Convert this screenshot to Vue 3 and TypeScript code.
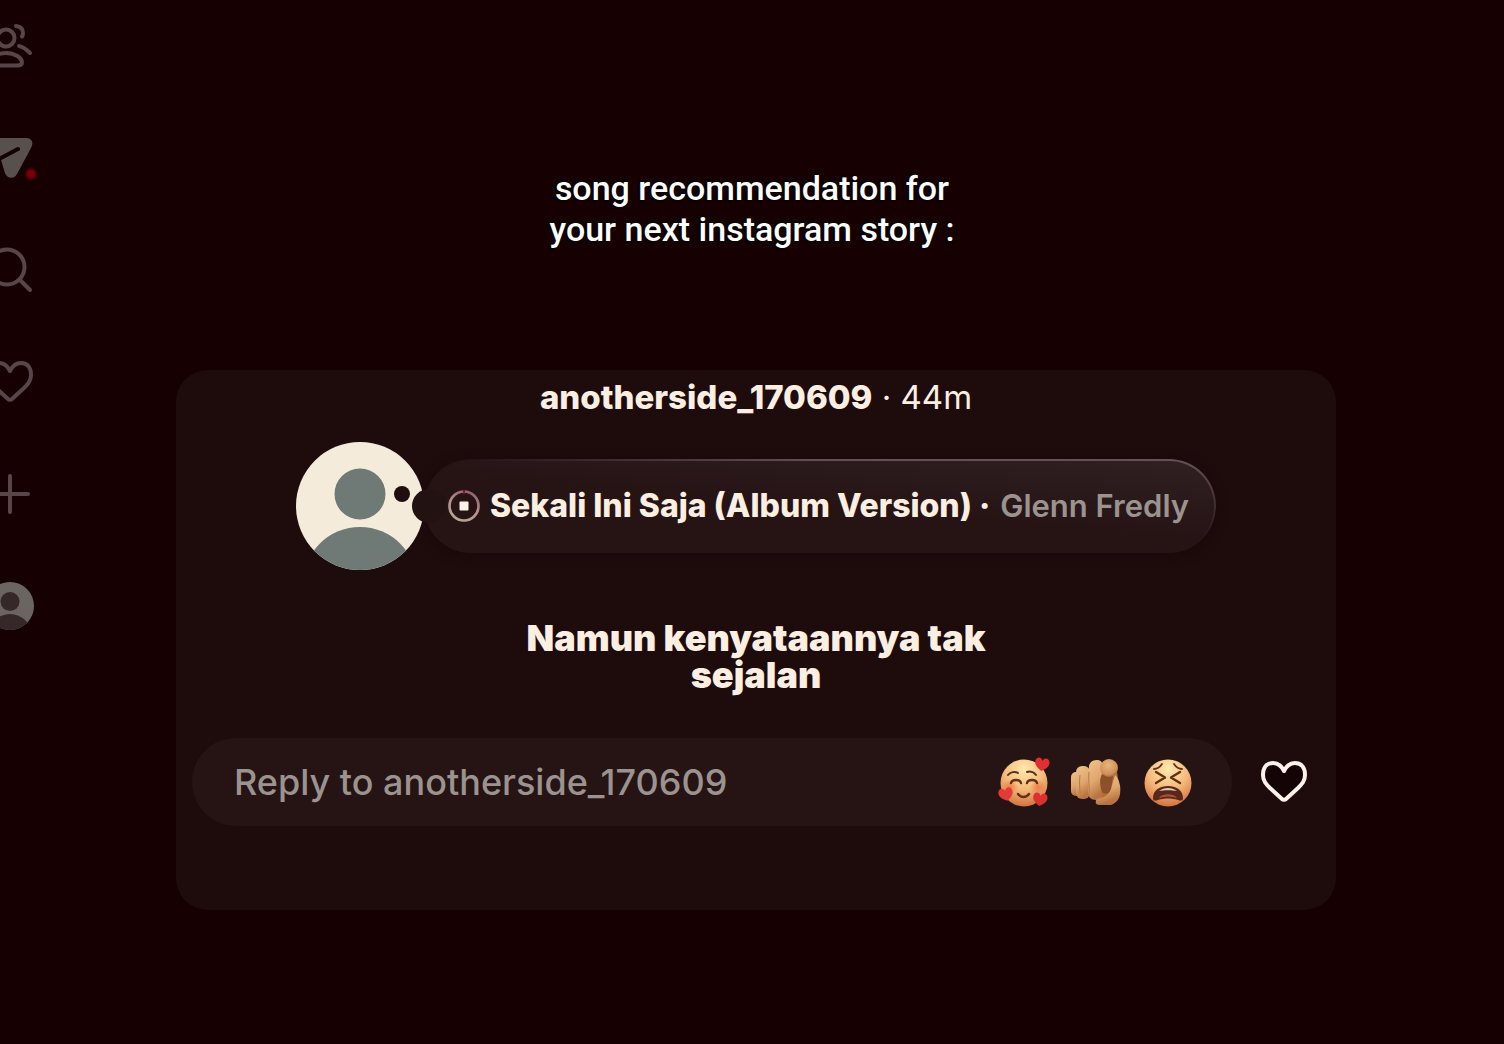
<script setup lang="ts">
import { ref } from 'vue'

const username = 'anotherside_170609'
const reply = ref('')
</script>

<template>
  <div class="page">
    <nav class="rail" aria-label="Main">
      <a href="#friends" aria-label="Friends">
        <svg viewBox="0 0 48 48" class="line">
          <circle cx="20" cy="16" r="8.500" />
          <path d="M20 31c-9 0-16 5-16 9.500 0 2 2 3 5 3h22c3 0 5-1 5-3C36 36 29 31 20 31z" />
          <path d="M30 4c5 .5 7 3.500 7 7 0 1.500-.3 2.500-1 3.500" />
          <path d="M33 24c5 1 8 4 11 7" />
        </svg>
      </a>
      <a href="#messages" aria-label="Messages">
        <svg viewBox="0 0 48 48">
          <path class="fill" d="M6 4h33c7 0 9 4 6 10L31 40c-3 5.500-10 5-12-1l-4-13L3 13C0 9 1 4 6 4z" />
          <path class="cut" d="M12 25.500l20-10.500" />
        </svg>
        <span class="dot"></span>
      </a>
      <a href="#search" aria-label="Search">
        <svg viewBox="0 0 48 48" class="line">
          <circle cx="21" cy="21" r="17.500" />
          <path d="M33.500 33.500L44 44" />
        </svg>
      </a>
      <a href="#activity" aria-label="Activity">
        <svg viewBox="0 0 48 48" class="line">
          <path d="M24 13C21 7 17 5 13 5 6 5 3 10 3 17c0 6 3 9 7 13l12 11c1 1 3 1 4 0l12-11c4-4 7-7 7-13 0-7-3-12-10-12-4 0-8 2-11 8z" />
        </svg>
      </a>
      <a href="#create" aria-label="Create">
        <svg viewBox="0 0 48 48" class="line">
          <path d="M24 6v36M6 24h36" />
        </svg>
      </a>
      <a href="#profile" aria-label="Profile">
        <svg viewBox="0 0 48 48">
          <clipPath id="rail-face"><circle cx="24" cy="24" r="24" /></clipPath>
          <g clip-path="url(#rail-face)">
            <rect width="48" height="48" fill="#6a6560" />
            <circle cx="24" cy="19.500" r="9.500" fill="#362729" />
            <circle cx="24" cy="54" r="22" fill="#362729" />
          </g>
        </svg>
      </a>
    </nav>

    <main class="content">
      <h1 class="caption">song recommendation for<br />your next instagram story :</h1>

      <section class="card">
        <header class="who"><b>{{ username }}</b> · 44m</header>

        <div class="note">
          <div class="avatar">
            <svg viewBox="0 0 128 128" role="img" aria-label="Profile picture">
              <clipPath id="face"><circle cx="64" cy="64" r="64" /></clipPath>
              <g clip-path="url(#face)">
                <rect width="128" height="128" fill="#f4ebdb" />
                <circle cx="64" cy="52" r="25.500" fill="#6f7975" />
                <circle cx="64" cy="142" r="57" fill="#6f7975" />
                <circle cx="106" cy="52" r="8" fill="#1e0e0e" />
              </g>
              <circle cx="133" cy="64" r="17" fill="#231212" />
            </svg>
          </div>
          <div class="song">
            <button type="button" class="stop" aria-label="Stop">
              <svg viewBox="0 0 32 32">
                <defs>
                  <linearGradient id="ring" x1="0.700" y1="0" x2="0.300" y2="1">
                    <stop offset="0" stop-color="#95606f" />
                    <stop offset="0.500" stop-color="#b78f8e" />
                    <stop offset="1" stop-color="#b8a595" />
                  </linearGradient>
                </defs>
                <circle cx="16" cy="16" r="14.500" fill="none" stroke="url(#ring)" stroke-width="2.600" />
                <path d="M16 0v4" stroke="#7b1547" stroke-width="2" />
                <rect x="11.500" y="11.500" width="9" height="9" rx="1" fill="#fff1e8" />
              </svg>
            </button>
            <span class="title">Sekali Ini Saja (Album Version) ·</span>
            <span class="artist">Glenn Fredly</span>
          </div>
        </div>

        <p class="lyric">Namun kenyataannya tak sejalan</p>

        <form class="reply" @submit.prevent>
          <div class="field">
            <input v-model="reply" type="text" :placeholder="`Reply to ${username}`" :aria-label="`Reply to ${username}`" />
            <button type="button" class="emoji" aria-label="Smiling face with hearts">
              <svg viewBox="0 0 52 52">
                <defs>
                  <radialGradient id="smile" cx="0.500" cy="0.200" r="0.850">
                    <stop offset="0" stop-color="#ffe8b0" />
                    <stop offset="0.500" stop-color="#f5bb7a" />
                    <stop offset="1" stop-color="#cf6a38" />
                  </radialGradient>
                  <radialGradient id="blush">
                    <stop offset="0" stop-color="#ee6840" stop-opacity="0.700" />
                    <stop offset="1" stop-color="#ee6840" stop-opacity="0" />
                  </radialGradient>
                  <path id="tiny-heart" d="M0 6C-5 3-8 0-7-4c1-4 6-4 7 0 1-4 6-4 7 0C8 0 5 3 0 6z" />
                </defs>
                <circle cx="26" cy="27" r="23.500" fill="url(#smile)" />
                <circle cx="12" cy="31" r="8" fill="url(#blush)" />
                <circle cx="40" cy="31" r="8" fill="url(#blush)" />
                <g fill="none" stroke="#603018" stroke-width="2" stroke-linecap="round">
                  <path d="M10 19c2-3 7-4 10-2M29 16c3-1 7 0 9 3" />
                  <path d="M13 27c1-4 9-4 10 0M29 27c1-4 9-4 10 0M20 38c3 4 8 4 11 0" stroke-width="2.400" />
                </g>
                <use href="#tiny-heart" transform="translate(44 9) rotate(8)" fill="#dc3031" />
                <use href="#tiny-heart" transform="translate(8 39) rotate(-12)" fill="#e33a37" />
                <use href="#tiny-heart" transform="translate(42 44) rotate(8)" fill="#dd3130" />
              </svg>
            </button>
            <button type="button" class="emoji" aria-label="Pointing at you">
              <svg viewBox="0 0 52 52">
                <defs>
                  <linearGradient id="finger" x1="0" y1="0" x2="0.300" y2="1">
                    <stop offset="0" stop-color="#f0c48a" />
                    <stop offset="0.600" stop-color="#dfa66e" />
                    <stop offset="1" stop-color="#b87442" />
                  </linearGradient>
                  <radialGradient id="tip" cx="0.450" cy="0.350" r="0.700">
                    <stop offset="0" stop-color="#e9b67c" />
                    <stop offset="0.700" stop-color="#cf9259" />
                    <stop offset="1" stop-color="#a3622f" />
                  </radialGradient>
                </defs>
                <path d="M24 10h22l3 18c1 9-1 19-8 21H30c-4 0-5-2-4-4l-3-9z" fill="#b06f3d" />
                <rect x="1" y="16" width="11" height="24" rx="5" fill="url(#finger)" />
                <rect x="6" y="10" width="14" height="33" rx="6" fill="url(#finger)" />
                <path d="M19 10c1-5 5-6 8-6 5 0 6 4 6 9l-1 26c0 4-3 5-6 5-5 0-8-3-8-8z" fill="url(#finger)" />
                <path d="M19 16c-1 8 1 17 0 24M10 19c-1 7 0 14 0 19" fill="none" stroke="#b67846" />
                <path d="M32 18c-3 6-2 12 0 18 4 3 8 1 9-2l2-14z" fill="#8c5128" />
                <path d="M27 43c7-1 12-4 14-10l4-14c5 5 6 13 5 19-1 7-5 10-12 10h-9c-3 0-4-3-2-5z" fill="url(#finger)" />
                <circle cx="39" cy="12" r="9" fill="url(#tip)" />
              </svg>
            </button>
            <button type="button" class="emoji" aria-label="Tired face">
              <svg viewBox="0 0 52 52">
                <circle cx="26" cy="27" r="23.500" fill="url(#smile)" />
                <g fill="none" stroke="#603018" stroke-width="2.400" stroke-linecap="round" stroke-linejoin="round">
                  <path d="M12 13c3 0 6-2 8-5M32 8c2 3 5 5 8 5" stroke-width="1.800" />
                  <path d="M14 16l9 5.500-9 5.500M38 16l-9 5.500 9 5.500" />
                </g>
                <path d="M11 42c0-8 7-12 15-12s15 4 15 12c0 3-2 3-5 2-6-2-14-2-20 0-3 1-5 1-5-2z" fill="#59281a" />
                <path d="M17 35c5-4 13-4 18 0-5-1-13-1-18 0z" fill="#d8cbc3" />
                <path d="M17 42c3-5 15-5 18 0-6-2-12-2-18 0z" fill="#a6523f" />
              </svg>
            </button>
          </div>
          <button type="button" class="like" aria-label="Like">
            <svg viewBox="0 0 48 48">
              <path d="M24 13C21 7 17 5 13 5 6 5 3 10 3 17c0 6 3 9 7 13l12 11c1 1 3 1 4 0l12-11c4-4 7-7 7-13 0-7-3-12-10-12-4 0-8 2-11 8z" />
            </svg>
          </button>
        </form>
      </section>
    </main>
  </div>
</template>

<style>
body {
  margin: 0;
  background: #160002;
}
</style>

<style scoped>
.page {
  display: flex;
  min-height: 100vh;
  overflow: hidden;
  background: #160002;
  color: #fdeee2;
  font-family: Inter, "Liberation Sans", sans-serif;
}

button {
  padding: 0;
  border: 0;
  background: none;
  font: inherit;
}

svg {
  display: block;
  width: 100%;
  height: 100%;
  overflow: visible;
}

.rail {
  display: flex;
  flex: none;
  flex-direction: column;
  gap: 64px;
  width: 48px;
  margin-left: -14px;
  padding-top: 22px;
}

.rail a {
  position: relative;
  height: 48px;
}

.line {
  fill: none;
  stroke: #574547;
  stroke-width: 4;
  stroke-linecap: round;
  stroke-linejoin: round;
}

.fill {
  fill: #57504c;
}

.cut {
  fill: none;
  stroke: #160002;
  stroke-width: 4;
  stroke-linecap: round;
}

.dot {
  position: absolute;
  right: -4px;
  bottom: 1px;
  width: 14px;
  height: 14px;
  border-radius: 50%;
  background: radial-gradient(closest-side, #7c0009 40%, #160002);
}

.content {
  flex: 1;
  min-width: 0;
  padding: 168px 168px 0 142px;
}

.caption {
  margin: 0 8px 0 0;
  color: #fff;
  font-family: Roboto, "Liberation Sans", sans-serif;
  font-size: 34px;
  font-weight: 500;
  line-height: 41px;
  text-align: center;
  text-shadow: 0 0 3px #000, 0 0 3px #000;
}

.card {
  margin-top: 120px;
  padding: 8px 16px 84px;
  border-radius: 32px;
  background: #1e0b0c;
}

.who {
  font-size: 33px;
  line-height: 38px;
  text-align: center;
}

.who b {
  font-weight: 800;
}

.note {
  display: flex;
  align-items: center;
  justify-content: center;
  margin-top: 26px;
}

.avatar {
  position: relative;
  z-index: 1;
  flex: none;
  width: 128px;
  height: 128px;
}

.song {
  display: flex;
  align-items: center;
  gap: 10px;
  box-sizing: border-box;
  height: 94px;
  padding: 0 25px 0 22px;
  border: 2px solid transparent;
  border-radius: 47px;
  background:
    linear-gradient(185deg, #302021, #261415 50%) padding-box,
    linear-gradient(90deg, #261415 6%, transparent 50%) border-box,
    linear-gradient(#655254, #261415 85%) border-box;
  box-shadow: 0 2px 12px #1a0809;
  font-size: 32px;
  line-height: 40px;
  white-space: nowrap;
}

.stop {
  position: relative;
  z-index: 2;
  flex: none;
  width: 32px;
  height: 32px;
}

.title {
  font-weight: 800;
}

.artist {
  color: #9b9390;
  font-size: 31px;
  font-weight: 600;
}

.lyric {
  max-width: 500px;
  margin: 50px auto 0;
  font-size: 36px;
  font-weight: 900;
  line-height: 37px;
  text-align: center;
}

.reply {
  display: flex;
  align-items: center;
  gap: 28px;
  margin-top: 44px;
}

.field {
  display: flex;
  flex: 1;
  align-items: center;
  gap: 20px;
  box-sizing: border-box;
  min-width: 0;
  height: 88px;
  padding: 0 38px 0 42px;
  border-radius: 44px;
  background: #261415;
}

.field input {
  flex: 1;
  min-width: 0;
  height: 48px;
  padding: 0;
  border: 0;
  outline: 0;
  background: none;
  color: #fdeee2;
  font: 500 36px Inter, "Liberation Sans", sans-serif;
}

.field input::placeholder {
  color: #9b9390;
  opacity: 1;
}

.emoji {
  flex: none;
  width: 52px;
  height: 52px;
}

.like {
  flex: none;
  width: 48px;
  height: 48px;
  margin-right: 12px;
}

.like path {
  fill: #140405;
  stroke: #fff1ec;
  stroke-width: 4;
  stroke-linejoin: round;
}
</style>
